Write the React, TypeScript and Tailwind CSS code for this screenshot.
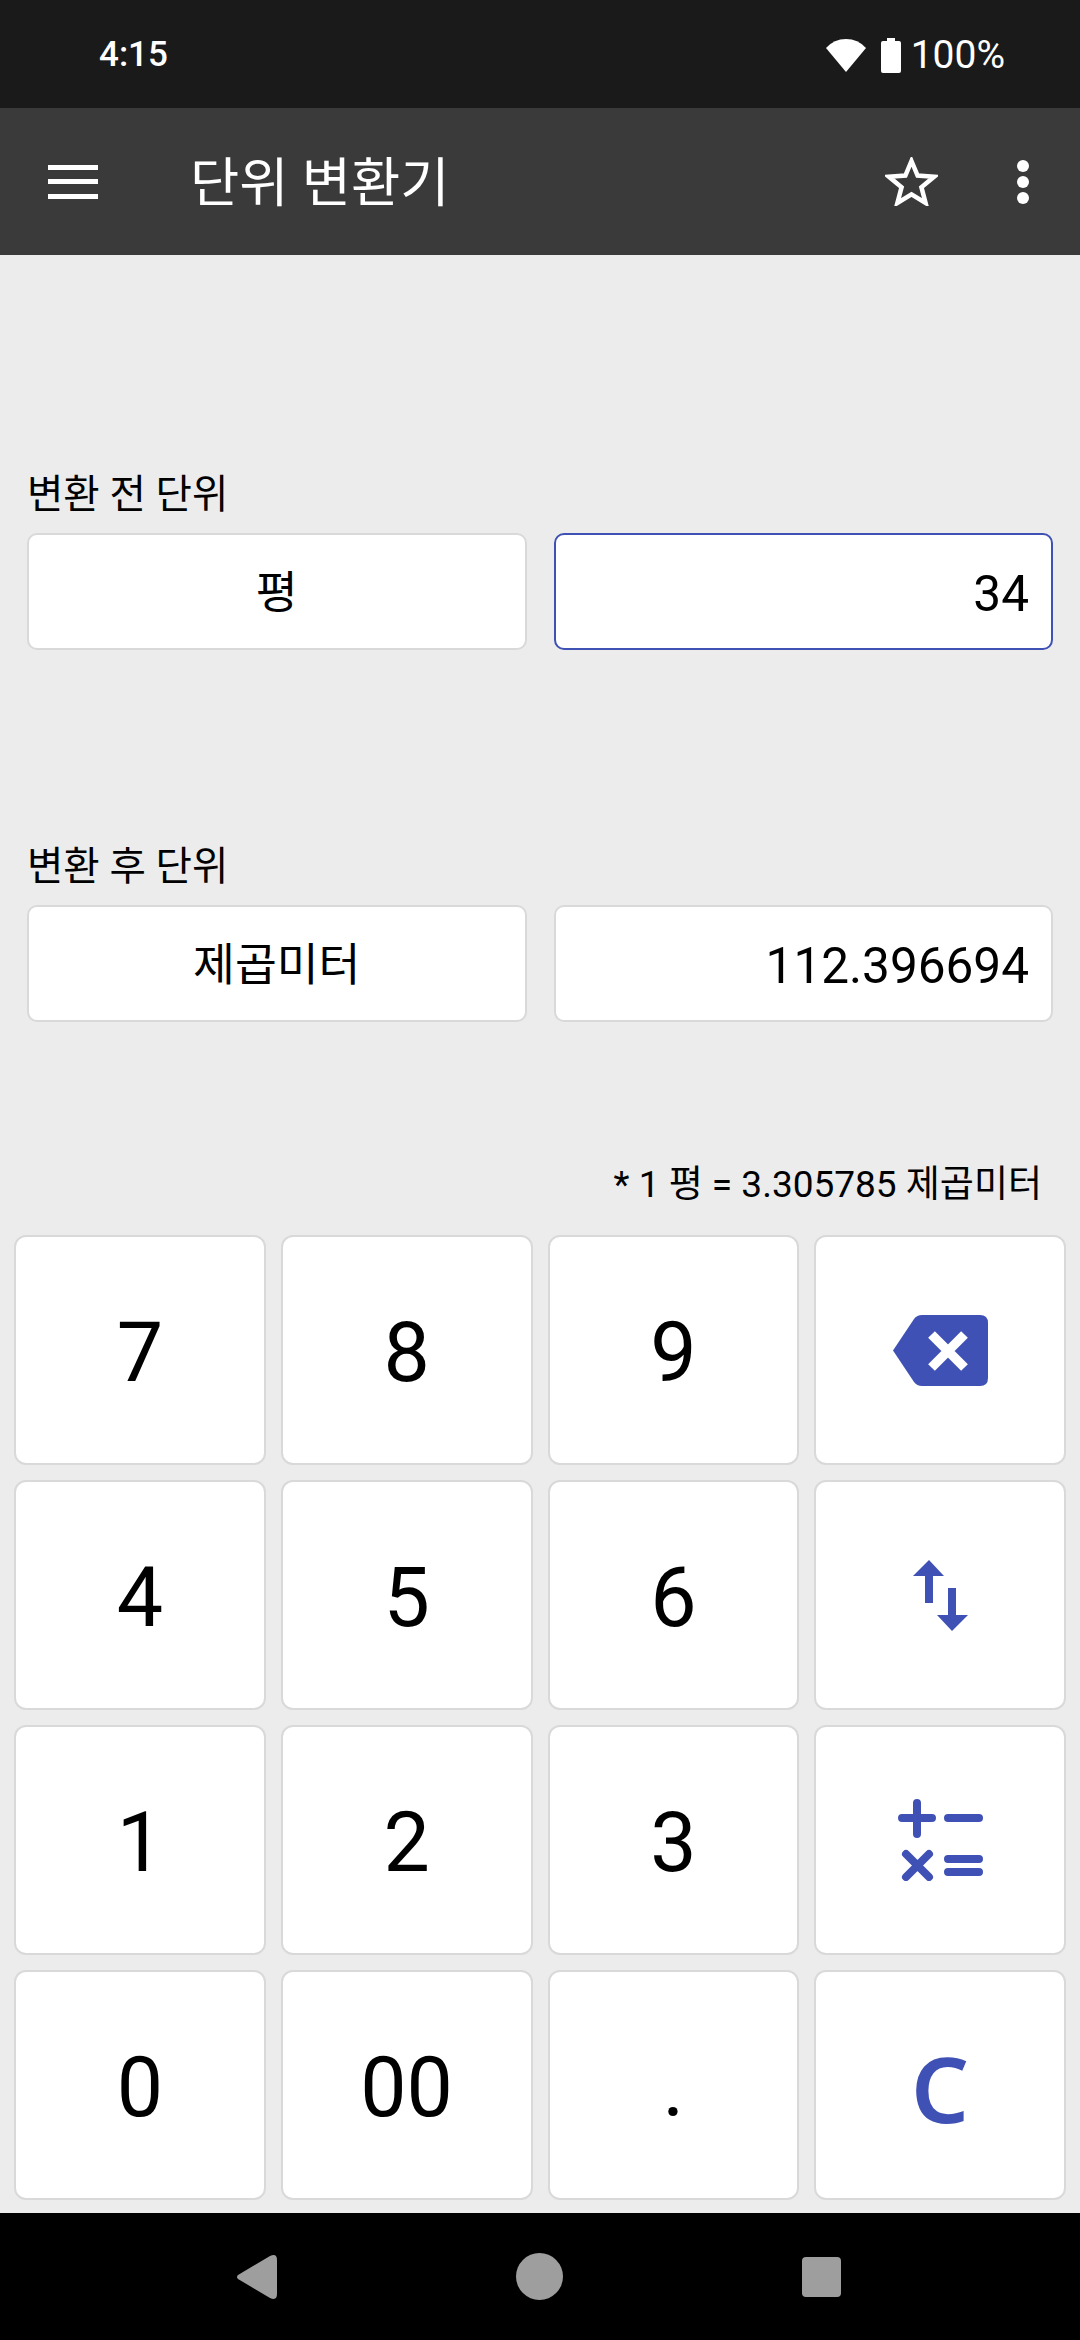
const Box = ({ children, right, active }: { children: React.ReactNode; right?: boolean; active?: boolean }) => (
  <div className={`flex h-[117px] items-center rounded-[10px] border-2 bg-white pt-[5px] text-black ${active ? "border-[#3f51b5]" : "border-[#d9d9d9]"} ${right ? "justify-end pr-[22px] text-[49.5px]" : "justify-center text-[45.5px]"}`}>
    {children}
  </div>
);

const Key = ({ children, icon }: { children: React.ReactNode; icon?: boolean }) => (
  <button className={`flex h-[230px] items-center justify-center rounded-[12px] border-2 border-[#d9d9d9] bg-white text-[82.5px] leading-none text-black ${icon ? "" : "pt-[6px]"}`}>
    {children}
  </button>
);

const BackspaceIcon = () => (
  <svg width="95" height="71" viewBox="0 0 95 71">
    <path d="M0 35.5 L21 4 Q24 0 29 0 H87 Q95 0 95 8 V63 Q95 71 87 71 H29 Q24 71 21 67 Z" fill="#3f51b5" />
    <path d="M38.5 19.5 L71.5 52.5 M71.5 19.5 L38.5 52.5" stroke="#fff" strokeWidth="9.5" fill="none" />
  </svg>
);

const SwapIcon = () => (
  <svg width="55" height="71" viewBox="0 0 55 71">
    <path d="M16 0 L31 16 H20 V43 H12 V16 H0 Z" fill="#3f51b5" />
    <path d="M39 71 L24 55 H35 V28 H43 V55 H55 Z" fill="#3f51b5" />
  </svg>
);

const CalcIcon = () => (
  <svg width="85" height="82" viewBox="0 0 85 82">
    <g stroke="#3f51b5" strokeWidth="8" strokeLinecap="round" fill="none">
      <path d="M4 19 H34 M19 4 V35" />
      <path d="M50 19 H81" />
      <path d="M8 55 L31 78 M31 55 L8 78" />
      <path d="M50 60 H81 M50 73 H81" />
    </g>
  </svg>
);

export default function App() {
  return (
    <div className="flex h-[2340px] w-[1080px] flex-col overflow-hidden bg-[#ececec] font-[Roboto,'Noto_Sans_CJK_KR',sans-serif]">
      <div className="flex h-[108px] shrink-0 items-center justify-between bg-[#1a1a1a] pl-[99px] pr-[75px] pt-[2px] text-white">
        <span className="text-[35px] font-medium">4:15</span>
        <div className="flex items-center">
          <svg width="40" height="33" viewBox="0 0 40 33" className="mr-[15px]">
            <path d="M20 33 L0 9 Q8 0 20 0 Q32 0 40 9 Z" fill="#fff" />
          </svg>
          <svg width="20" height="35" viewBox="0 0 20 35" className="mr-[10px]">
            <path d="M6 0 H14 V3 H18 Q20 3 20 5 V33 Q20 35 18 35 H2 Q0 35 0 33 V5 Q0 3 2 3 H6 Z" fill="#fff" />
          </svg>
          <span className="text-[39px]">100%</span>
        </div>
      </div>

      <header className="flex h-[147px] shrink-0 items-center bg-[#3a3a3a] text-white">
        <div className="ml-[48px] flex h-[34px] w-[50px] flex-col justify-between">
          <span className="h-[5px] bg-white" />
          <span className="h-[5px] bg-white" />
          <span className="h-[5px] bg-white" />
        </div>
        <h1 className="ml-[92px] flex-1 pt-[5px] text-[53.5px] font-normal leading-none">단위 변환기</h1>
        <svg width="53" height="49" viewBox="0 0 53 49" className="mr-[79px]">
          <path d="M26.5 4 L32.6 18.6 L49 19.8 L36.4 30.2 L40.6 46 L26.5 37.4 L12.4 46 L16.6 30.2 L4 19.8 L20.4 18.6 Z" fill="none" stroke="#fff" strokeWidth="4.5" strokeLinejoin="miter" />
        </svg>
        <div className="mr-[51px] flex h-[44px] w-[12px] flex-col justify-between">
          <span className="h-[12px] rounded-full bg-white" />
          <span className="h-[12px] rounded-full bg-white" />
          <span className="h-[12px] rounded-full bg-white" />
        </div>
      </header>

      <main className="flex flex-1 flex-col">
        <section className="px-[27px] pt-[217px]">
          <p className="mb-[15px] text-[39.5px] leading-[46px] text-black">변환 전 단위</p>
          <div className="grid grid-cols-2 gap-[27px]">
            <Box>평</Box>
            <Box right active>34</Box>
          </div>
        </section>

        <section className="px-[27px] pt-[194px]">
          <p className="mb-[15px] text-[39.5px] leading-[46px] text-black">변환 후 단위</p>
          <div className="grid grid-cols-2 gap-[27px]">
            <Box>제곱미터</Box>
            <Box right>112.396694</Box>
          </div>
        </section>

        <p className="mb-[27px] mt-[140px] pr-[38px] text-right text-[37px] leading-[46px] text-black">* 1 평 = 3.305785 제곱미터</p>

        <div className="grid grid-cols-4 gap-[15px] px-[14px]">
          <Key>7</Key>
          <Key>8</Key>
          <Key>9</Key>
          <Key icon><BackspaceIcon /></Key>
          <Key>4</Key>
          <Key>5</Key>
          <Key>6</Key>
          <Key icon><SwapIcon /></Key>
          <Key>1</Key>
          <Key>2</Key>
          <Key>3</Key>
          <Key icon><CalcIcon /></Key>
          <Key>0</Key>
          <Key>00</Key>
          <Key>.</Key>
          <Key><span className="font-['Noto_Sans'] text-[91px] font-semibold text-[#3f51b5]">C</span></Key>
        </div>
      </main>

      <nav className="flex h-[127px] shrink-0 items-center bg-black">
        <svg width="40" height="44" viewBox="0 0 40 44" className="ml-[237px]">
          <path d="M1 20 L33 1 Q40 -2 40 5 V39 Q40 46 33 43 L1 24 Q-1 22 1 20 Z" fill="#9e9e9e" />
        </svg>
        <span className="ml-[239px] h-[47px] w-[47px] rounded-full bg-[#9e9e9e]" />
        <span className="ml-[239px] h-[40px] w-[39px] rounded-[4px] bg-[#9e9e9e]" />
      </nav>
    </div>
  );
}
